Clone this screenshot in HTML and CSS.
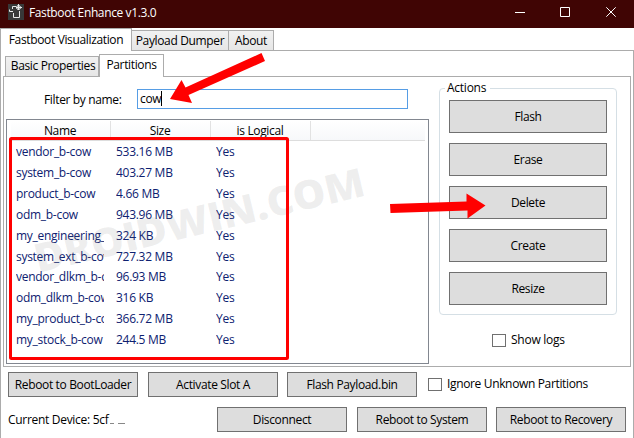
FILE: index.html
```html
<!DOCTYPE html>
<html lang="en">
<head>
<meta charset="utf-8">
<title>Fastboot Enhance</title>
<link rel="stylesheet" href="styles.css">
</head>
<body>
<div class="window">
  <header class="titlebar">
    <svg class="app-icon" width="16" height="16" viewBox="0 0 16 16"><rect width="16" height="16" fill="#383838"/><g fill="none" stroke="#e8e8e8"><path d="M4.500 5V2.500H8M5.500 9v4.500h6V7"/><circle cx="10.500" cy="3.500" r="2"/><path d="M1.500 5.500v2H5M10.500 0v6M8 3.500h6"/></g></svg>
    <span class="title">Fastboot Enhance v1.3.0</span>
    <svg class="controls" width="102" height="12" viewBox="0 0 102 12"><g fill="none" stroke="#fff"><path d="M0 6.500h10M45.500 1.500h9v9h-9zM91.300 1.300l9.400 9.400M100.700 1.300l-9.400 9.400"/></g></svg>
  </header>
  <nav class="tabs main-tabs">
    <span class="tab active t1">Fastboot Visualization</span><span class="tab t2">Payload Dumper</span><span class="tab t3">About</span>
  </nav>
  <main class="page">
    <nav class="tabs sub-tabs">
      <span class="tab s1">Basic Properties</span><span class="tab active s2">Partitions</span>
    </nav>
    <section class="panel">
      <div class="left">
        <div class="filter"><label>Filter by name:</label><div class="input">cow<i class="caret"></i></div></div>
        <div class="list">
          <div class="row head"><span>Name</span><span>Size</span><span>is Logical</span></div>
          <div class="rows">
            <div class="row"><span>vendor_b-cow</span><span>533.16 MB</span><span>Yes</span></div>
            <div class="row"><span>system_b-cow</span><span>403.27 MB</span><span>Yes</span></div>
            <div class="row"><span>product_b-cow</span><span>4.66 MB</span><span>Yes</span></div>
            <div class="row"><span>odm_b-cow</span><span>943.96 MB</span><span>Yes</span></div>
            <div class="row"><span>my_engineering_</span><span>324 KB</span><span>Yes</span></div>
            <div class="row"><span>system_ext_b-cow</span><span>727.32 MB</span><span>Yes</span></div>
            <div class="row"><span>vendor_dlkm_b-cow</span><span>96.93 MB</span><span>Yes</span></div>
            <div class="row"><span>odm_dlkm_b-cow</span><span>316 KB</span><span>Yes</span></div>
            <div class="row"><span>my_product_b-cow</span><span>366.72 MB</span><span>Yes</span></div>
            <div class="row"><span>my_stock_b-cow</span><span>244.5 MB</span><span>Yes</span></div>
          </div>
        </div>
      </div>
      <aside class="right">
        <fieldset class="actions">
          <legend>Actions</legend>
          <div class="btn">Flash</div><div class="btn">Erase</div><div class="btn">Delete</div><div class="btn">Create</div><div class="btn">Resize</div>
        </fieldset>
        <label class="check logs"><i class="box"></i>Show logs</label>
      </aside>
    </section>
    <div class="bar">
      <div class="btn">Reboot to BootLoader</div><div class="btn">Activate Slot A</div><div class="btn">Flash Payload.bin</div>
      <label class="check ignore"><i class="box"></i>Ignore Unknown Partitions</label>
    </div>
    <div class="bar bottom">
      <span class="device">Current Device: 5cf<i class="scrap"></i><i class="scrap wide"></i></span>
      <div class="btn">Disconnect</div><div class="btn">Reboot to System</div><div class="btn">Reboot to Recovery</div>
    </div>
  </main>
  <svg class="overlay" width="634" height="438" viewBox="0 0 634 438">
    <text class="watermark" transform="translate(38 273) rotate(-13.300)" textLength="338" lengthAdjust="spacingAndGlyphs">DROIDWIN.COM</text>
    <rect x="10.500" y="138.500" width="277" height="220" rx="1" fill="none" stroke="#f00" stroke-width="3"/>
    <path fill="#f00" d="M261.500 53L265 61L188.500 95L192 103L170 99L181.500 80L185.500 87.500ZM390 204L466.500 201.500V193.500L485.500 205.500L467.500 218.500V210.500L390.500 213Z"/>
  </svg>
</div>
</body>
</html>
```
FILE: styles.css
```css
* { box-sizing: border-box; }
body { margin: 0; font: 12px/16px "Open Sans", "Noto Sans", sans-serif; letter-spacing: -0.35px; color: #000; }
i { font-style: normal; }
.window { position: relative; width: 634px; height: 438px; background: #fff; overflow: hidden; display: flex; flex-direction: column; }
.titlebar { height: 28px; background: #400504; color: #fff; display: flex; flex: none; align-items: flex-start; padding-left: 8px; }
.app-icon { margin-top: 4px; }
.title { margin: 5px 0 0 5px; letter-spacing: -0.38px; }
.controls { margin: 6px 17px 0 auto; }
.tabs { display: flex; align-items: flex-end; position: relative; z-index: 1; white-space: nowrap; }
.tab { height: 21px; border: 1px solid #acacac; border-left-width: 0; background: linear-gradient(#f1f1f1, #e6e6e6); text-align: center; padding-top: 2px; }
.tab.active { background: #fff; border-bottom: 0; border-left-width: 1px; height: 23px; padding-top: 3px; }
.main-tabs { height: 23px; flex: none; }
.t1 { width: 132px; }
.t2 { width: 97px; }
.t3 { width: 45px; }
.page { flex: 1; margin-top: -1px; border: 1px solid #acacac; border-bottom: 0; padding-top: 3px; }
.sub-tabs { height: 23px; margin-left: 3px; padding-left: 1px; }
.tab.s1 { width: 94px; border-left-width: 1px; padding-left: 2px; padding-top: 1px; }
.tab.s2 { width: 65px; padding-top: 2px; }
.panel { height: 291px; margin: -1px 2px 0; border: 1px solid #acacac; display: flex; }
.left { width: 425px; padding: 12px 0 0 2px; }
.filter { display: flex; align-items: flex-start; }
.filter label { width: 131px; padding: 3px 0 0 38px; }
.input { width: 271px; height: 20px; border: 1px solid #569de5; padding: 1px 0 0 2px; display: flex; }
.caret { width: 1px; height: 15px; background: #000; }
.list { width: 423px; height: 245px; margin-top: 10px; border: 1px solid #828790; padding: 1px 3px; }
.row { display: grid; grid-template-columns: 100px 100px 100px 1fr; }
.head { height: 20px; text-align: center; border-bottom: 1px solid #ddd; background: linear-gradient(#fff, #f7f8fa); margin-left: 1px; }
.head span { border-right: 1px solid #e2e2e2; padding-top: 2px; padding-right: 1px; }
.rows { padding-top: 1px; }
.rows .row { height: 20.850px; align-items: center; color: #0d2170; letter-spacing: -0.28px; }
.rows span { overflow: hidden; white-space: nowrap; margin: 0 6px; }
.right { flex: 1; padding-top: 3px; }
.actions { width: 178px; height: 235px; margin: 0 0 0 10px; border: 1px solid #d5dfe5; border-radius: 4px; padding: 4px 9px 0; }
.actions legend { padding: 0 4px 0 2px; margin-left: -4px; letter-spacing: -0.25px; }
.btn { border: 1px solid #707070; background: #ddd; display: flex; align-items: center; justify-content: center; white-space: nowrap; }
.actions .btn { height: 33px; margin-bottom: 10px; }
.check { display: flex; align-items: center; white-space: nowrap; }
.box { width: 14px; height: 13px; border: 1px solid #707070; margin-right: 5px; background: #fff; }
.logs { margin: 17px 0 0 63px; letter-spacing: -0.25px; }
.bar { display: flex; align-items: center; gap: 10px; height: 25px; margin: 5px 7px 0; }
.bar .btn { width: 130px; height: 25px; flex: none; }
.bar .btn:nth-of-type(3) { margin-left: -1px; }
.ignore { margin: -1px 0 0 1px; }
.bar.bottom { margin: 10px 7px 0 7px; }
.bar.bottom .btn { margin-left: 0; }
.bar.bottom .btn:nth-of-type(3) { margin-left: -1px; }
.device { flex: 1; white-space: nowrap; letter-spacing: -0.3px; }
.scrap { display: inline-block; width: 4px; height: 1px; background: #888; margin-left: 2px; }
.wide { width: 7px; margin-left: 4px; }
.overlay { position: absolute; inset: 0; }
.watermark { font: 800 40px "Open Sans", sans-serif; fill: #777; fill-opacity: .13; letter-spacing: 0; }
```
